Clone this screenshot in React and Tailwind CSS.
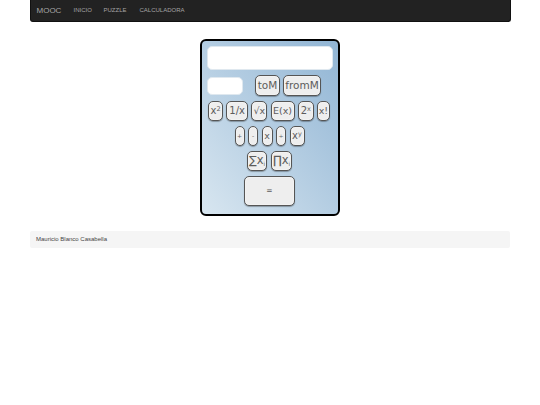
import React from "react";

const key = "flex items-center justify-center rounded-[5px] border border-[#555] bg-[#eeeeee] text-[#5c5c5c] shadow-[inset_0_0_2px_#fff,0_1px_1px_rgba(0,0,0,0.3)] font-['DejaVu_Sans',sans-serif] leading-none";

function K({ w, h = "h-5", size = "text-[10px]", children }) {
  return <div className={`${key} ${h} ${size}`} style={{ width: w }}>{children}</div>;
}

export default function App() {
  return (
    <div className="min-h-[405px] bg-white font-['Liberation_Sans',sans-serif]">
      <div className="mx-auto w-[481px]">
        <nav className="flex h-[22px] items-center rounded-b-[3px] border border-[#111] border-t-0 bg-[#222222] pl-[6px] text-[#a5a5a5]">
          <span className="w-[37px] text-[8px]">MOOC</span>
          <span className="w-[30px] text-[6px]">INICIO</span>
          <span className="w-[36px] text-[6px]">PUZZLE</span>
          <span className="text-[6px]">CALCULADORA</span>
        </nav>
      </div>

      <div className="mt-[17px] flex justify-center">
        <div className="flex h-[177px] w-[140px] flex-col rounded-[6px] border-2 border-black bg-gradient-to-tr from-[#d8e6f0] to-[#91b5d4] px-[5px] pt-[5px]">
          <div className="h-[24px] w-[126px] rounded-[5px] border border-[#dfe8ef] bg-white" />
          <div className="mt-[5px] flex h-[21px] items-center">
            <div className="h-[18px] w-[36px] rounded-[5px] border border-[#dfe8ef] bg-white" />
            <div className="ml-[12px] flex gap-[3px]">
              <K w="25px" h="h-[21px]" size="text-[10.5px]">toM</K>
              <K w="38px" h="h-[21px]" size="text-[10.5px]">fromM</K>
            </div>
          </div>
          <div className="mt-[5px] ml-[1px] flex gap-[3.2px]">
            <K w="15px"><span>x<sup className="text-[6.5px] leading-none">2</sup></span></K>
            <K w="22px">1/x</K>
            <K w="16px" size="text-[9.5px]">√x</K>
            <K w="24px" size="text-[9.5px]">E(x)</K>
            <K w="16px"><span>2<sup className="text-[6.5px] leading-none">x</sup></span></K>
            <K w="13px" size="text-[9.5px]">x!</K>
          </div>
          <div className="mt-[5px] flex justify-center gap-[3.5px] pr-[1px]">
            <K w="10px" size="text-[6px]">+</K>
            <K w="10px" size="text-[6px]">-</K>
            <K w="11px" size="text-[9.5px]">x</K>
            <K w="10px" size="text-[6px]">÷</K>
            <K w="15px"><span>x<sup className="text-[6.5px] leading-none">y</sup></span></K>
          </div>
          <div className="mt-[5px] flex justify-center gap-[4px] pr-[1px]">
            <K w="20px" size="text-[11.5px]"><span>∑x<sub className="text-[5.5px] leading-none">i</sub></span></K>
            <K w="21px" size="text-[11.5px]"><span>∏x<sub className="text-[5.5px] leading-none">i</sub></span></K>
          </div>
          <div className="mt-[5px] flex justify-center pr-[1px]">
            <K w="51px" h="h-[30px]" size="text-[7.5px]">=</K>
          </div>
        </div>
      </div>

      <div className="mx-auto mt-[15px] flex h-[17px] w-[480px] items-center rounded-[2px] bg-[#f5f5f5] pl-[6px] text-[6px] text-[#444]">
        Mauricio Blanco Casabella
      </div>
    </div>
  );
}
